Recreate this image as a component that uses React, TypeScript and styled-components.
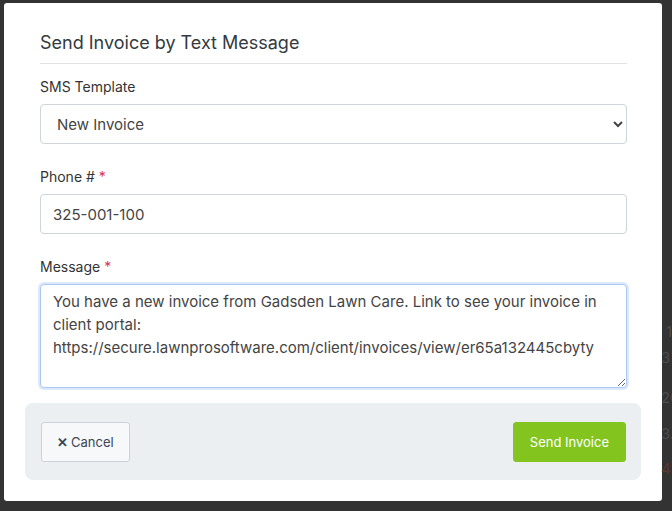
import React from "react";
import styled, { createGlobalStyle } from "styled-components";

const font = `Inter, Roboto, "Liberation Sans", sans-serif`;

const GlobalStyle = createGlobalStyle`
  html, body {
    margin: 0;
    padding: 0;
    background: #333333;
    font-family: ${font};
  }
`;

const Backdrop = styled.div`
  display: flex;
  align-items: flex-start;
  width: 672px;
  height: 511px;
  padding: 3px 0 0 4px;
  box-sizing: border-box;
  background: #333333;
  overflow: hidden;
`;

const Modal = styled.div`
  width: 658px;
  height: 498px;
  flex-shrink: 0;
  background: #ffffff;
  border-radius: 3px;
  box-sizing: border-box;
  padding: 28px 21px 0 21px;
  display: flex;
  flex-direction: column;
`;

const Body = styled.div`
  padding: 0 14px 0 15px;
  display: flex;
  flex-direction: column;
`;

const Title = styled.h2`
  margin: 0;
  font-size: 18px;
  font-weight: 400;
  color: #333a40;
  line-height: 24px;
  padding-bottom: 8px;
  border-bottom: 1px solid #e3e3e3;
`;

const Field = styled.div<{ $top: number }>`
  display: flex;
  flex-direction: column;
  margin-top: ${(p) => p.$top}px;
`;

const Label = styled.label`
  font-size: 14px;
  color: #333;
  line-height: 18px;
  margin-bottom: 8px;
`;

const Req = styled.span`
  color: #dc3545;
`;

const Select = styled.select`
  height: 40px;
  border: 1px solid #ced4da;
  border-radius: 4px;
  background: #fff;
  padding: 0 8px 0 12px;
  font-family: ${font};
  font-size: 15px;
  color: #444;
`;

const Input = styled.input`
  height: 40px;
  box-sizing: border-box;
  border: 1px solid #ced4da;
  border-radius: 4px;
  padding: 0 12px;
  font-family: ${font};
  font-size: 15px;
  color: #444;
`;

const TextArea = styled.textarea`
  height: 104px;
  box-sizing: border-box;
  border: 1px solid #a9c9f2;
  box-shadow: 0 0 0 2px #dde9fb;
  border-radius: 4px;
  padding: 5px 12px;
  font-family: ${font};
  font-size: 15px;
  line-height: 23px;
  color: #444;
  outline: none;
  resize: vertical;
`;

const Footer = styled.div`
  margin-top: 15px;
  height: 77px;
  background: #eceff2;
  border-radius: 8px;
  display: flex;
  align-items: center;
  justify-content: space-between;
  padding: 0 15px 0 16px;
`;

const Button = styled.button<{ $primary?: boolean }>`
  height: 40px;
  border-radius: 3px;
  font-family: ${font};
  font-size: 13px;
  padding: 0 ${(p) => (p.$primary ? 16 : 15)}px;
  cursor: pointer;
  border: 1px solid ${(p) => (p.$primary ? "#84c41f" : "#ccd2da")};
  background: ${(p) => (p.$primary ? "#84c41f" : "#f7f8fa")};
  color: ${(p) => (p.$primary ? "#ffffff" : "#3b4656")};
`;

const X = styled.span`
  font-weight: 700;
  margin-right: 3px;
`;

const Strip = styled.div`
  width: 30px;
  margin-left: -1px;
  display: flex;
  flex-direction: column;
  font-family: ${font};
  font-size: 15px;
  line-height: 18px;
  padding-top: 318px;
  white-space: nowrap;
`;

const Ghost = styled.span<{ $red?: boolean; $indent?: number; $gap: number }>`
  color: ${(p) => (p.$red ? "#5e3632" : "#4c4c4c")};
  padding-left: ${(p) => p.$indent ?? 0}px;
  margin-top: ${(p) => p.$gap}px;
`;

export default function App() {
  return (
    <>
      <GlobalStyle />
      <Backdrop>
        <Modal>
          <Body>
            <Title>Send Invoice by Text Message</Title>
            <Field $top={14}>
              <Label>SMS Template</Label>
              <Select defaultValue="new">
                <option value="new">New Invoice</option>
              </Select>
            </Field>
            <Field $top={24}>
              <Label>
                Phone # <Req>*</Req>
              </Label>
              <Input defaultValue="325-001-100" />
            </Field>
            <Field $top={24}>
              <Label>
                Message <Req>*</Req>
              </Label>
              <TextArea defaultValue="You have a new invoice from Gadsden Lawn Care. Link to see your invoice in client portal: https://secure.lawnprosoftware.com/client/invoices/view/er65a132445cbyty" />
            </Field>
          </Body>
          <Footer>
            <Button>
              <X>✕</X>Cancel
            </Button>
            <Button $primary>Send Invoice</Button>
          </Footer>
        </Modal>
        <Strip>
          <Ghost $indent={5} $gap={2}>1</Ghost>
          <Ghost $gap={8}>3</Ghost>
          <Ghost $gap={22}>20</Ghost>
          <Ghost $gap={18}>3.</Ghost>
          <Ghost $red $gap={17}>47</Ghost>
        </Strip>
      </Backdrop>
    </>
  );
}
